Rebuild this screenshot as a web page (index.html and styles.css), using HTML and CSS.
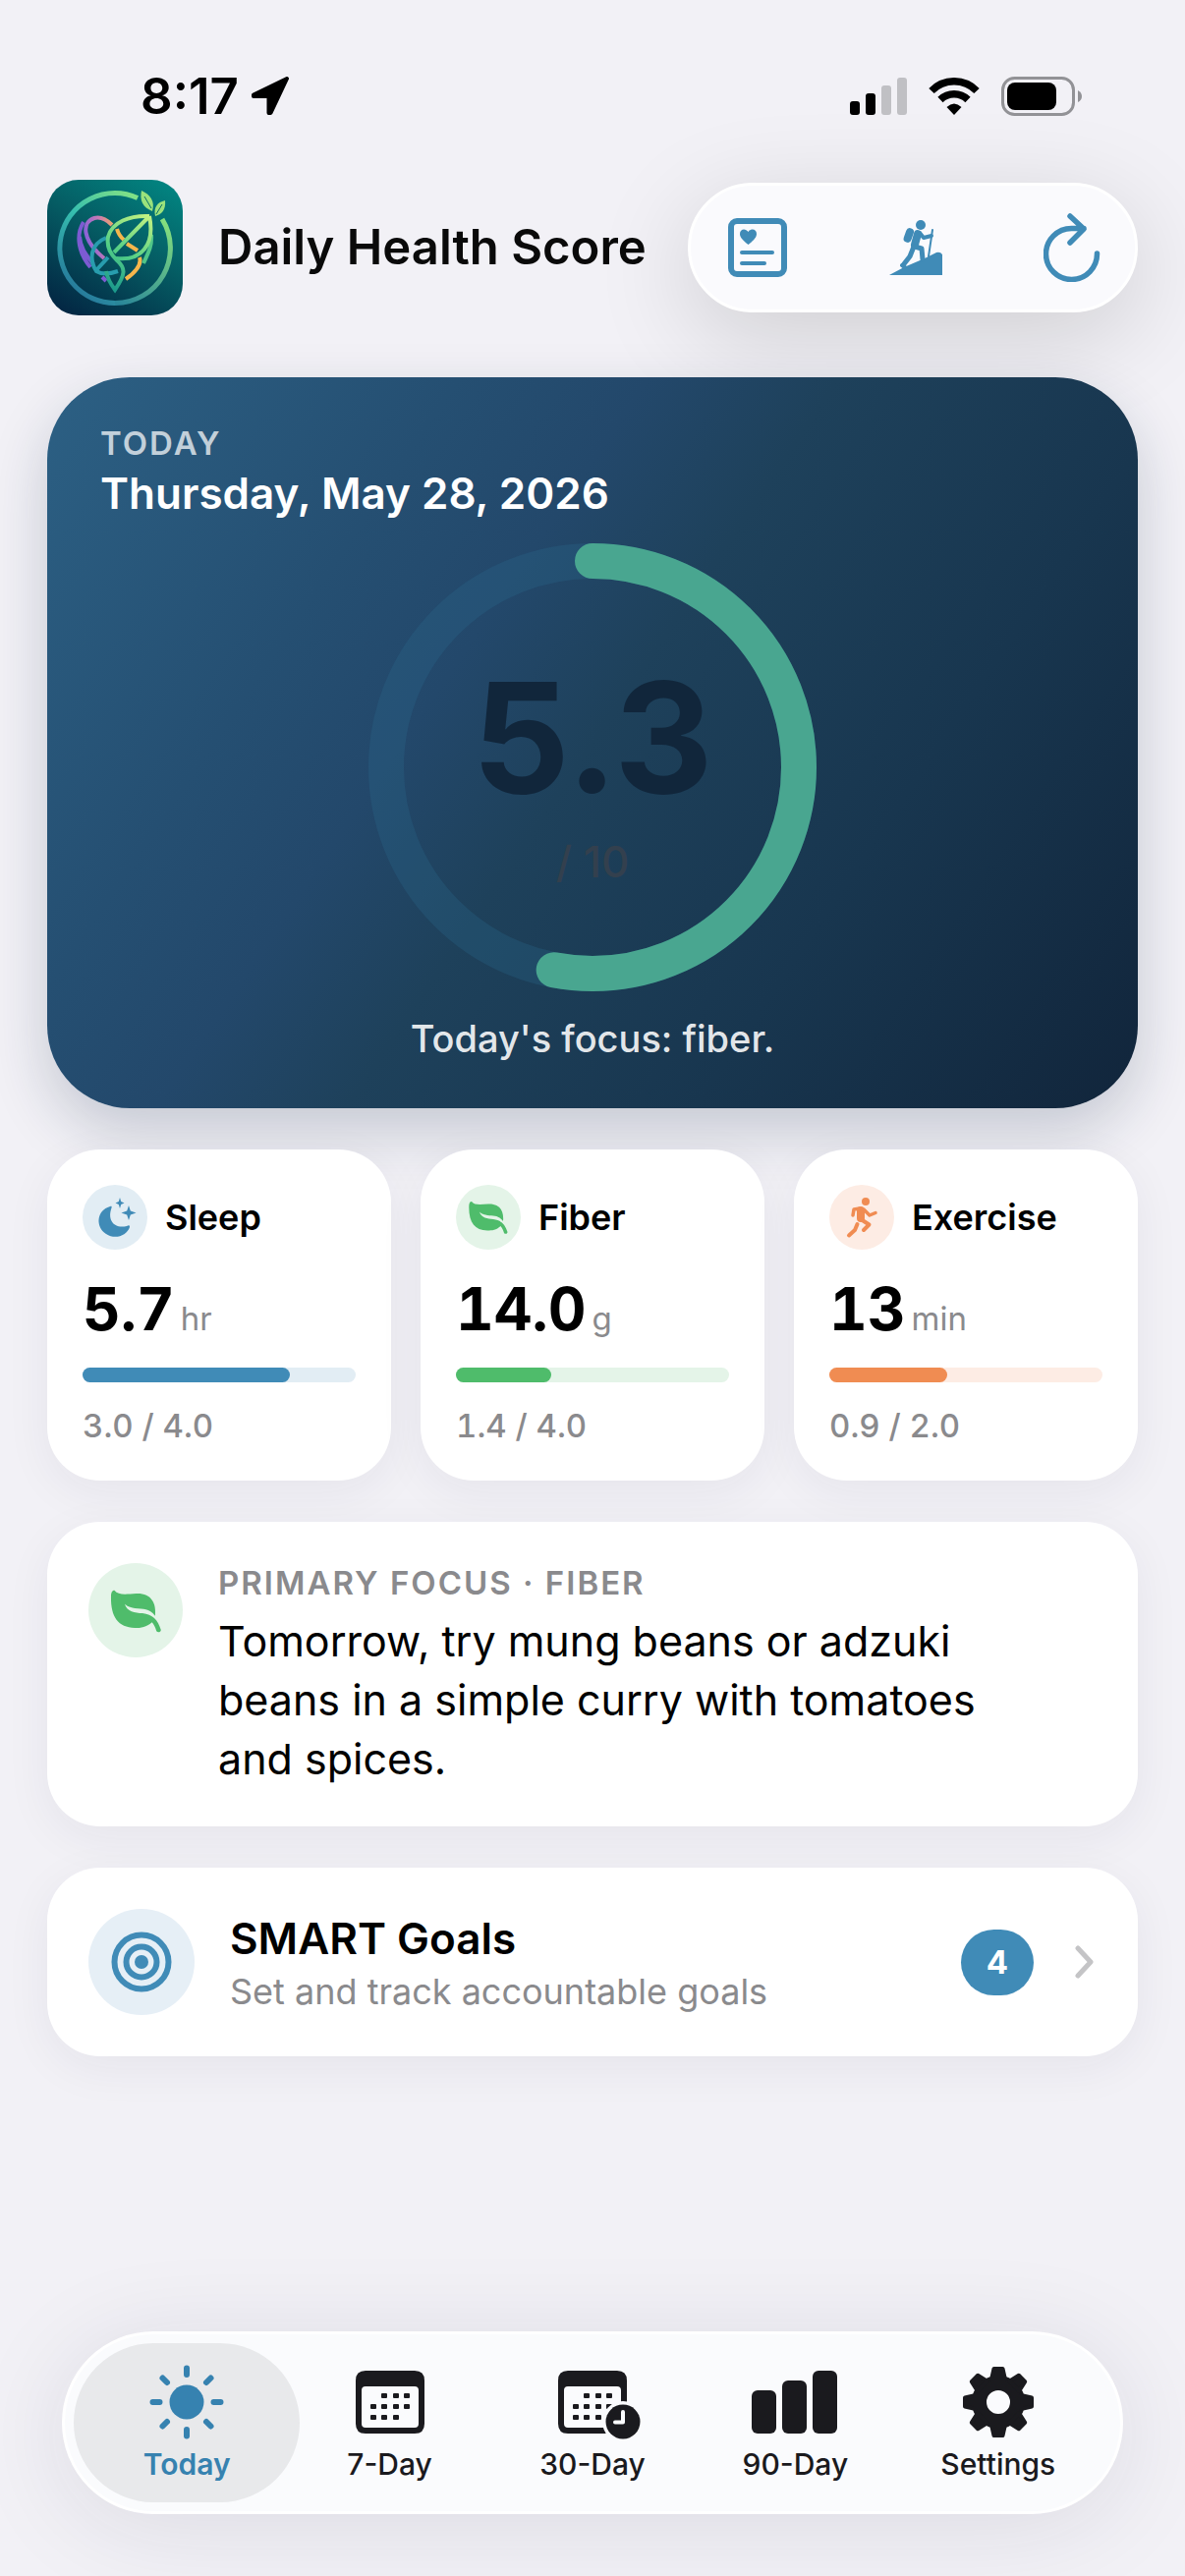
FILE: index.html
```html
<!DOCTYPE html>
<html lang="en">
<head>
<meta charset="utf-8">
<meta name="viewport" content="width=device-width, initial-scale=1">
<title>Daily Health Score</title>
<link rel="stylesheet" href="styles.css">
</head>
<body>
<svg class="defs" width="0" height="0" aria-hidden="true">
  <symbol id="leaf" viewBox="12 15 44 36">
    <path d="M17 17C20 21 26 20 34 19.500C46 19 50 27 49 37C44 30.500 40 32 33 31C28 30 26.500 29 25 27.500C27 34 33 34.500 39 35C47 36 51 40 53.500 48C53.500 50 51 50.500 50 49C49 45.500 48 44 46.500 42C42 46 38 46.500 33 46.500C20 46 14 38 14.300 22C14.300 19 15 17 17 17Z" fill="currentColor"/>
  </symbol>
  <symbol id="calendar" viewBox="0 0 70 64">
    <path fill-rule="evenodd" fill="currentColor" d="M10 0H60Q70 0 70 10V54Q70 64 60 64H10Q0 64 0 54V10Q0 0 10 0ZM10 16Q6 16 6 20V54Q6 58 10 58H60Q64 58 64 54V20Q64 16 60 16Z"/>
    <g fill="currentColor">
      <rect x="26" y="23" width="6" height="5" rx="1"/><rect x="38" y="23" width="6" height="5" rx="1"/><rect x="49" y="23" width="6" height="5" rx="1"/>
      <rect x="15" y="34" width="6" height="5" rx="1"/><rect x="26" y="34" width="6" height="5" rx="1"/><rect x="38" y="34" width="6" height="5" rx="1"/><rect x="49" y="34" width="6" height="5" rx="1"/>
      <rect x="15" y="45" width="6" height="5" rx="1"/><rect x="26" y="45" width="6" height="5" rx="1"/><rect x="38" y="45" width="6" height="5" rx="1"/>
    </g>
  </symbol>
</svg>

<div class="app">
  <div class="status">
    <div class="status-left">
      <span class="clock">8:17</span>
      <svg width="40" height="40" viewBox="0 0 40 40" aria-hidden="true"><path d="M37 2L3 18.500V20H18.500V37H20.500Z" fill="#000" stroke="#000" stroke-width="4" stroke-linejoin="round"/></svg>
    </div>
    <div class="status-right">
      <svg width="58" height="38" viewBox="0 0 58 38" aria-hidden="true">
        <rect x="0" y="24" width="10" height="14" rx="3"/><rect x="16" y="16" width="10" height="22" rx="3"/>
        <g fill="#c0c0c4"><rect x="32" y="8" width="10" height="30" rx="3"/><rect x="48" y="0" width="10" height="38" rx="3"/></g>
      </svg>
      <svg width="52" height="38" viewBox="0 0 52 38" aria-hidden="true">
        <g fill="none" stroke="#000" stroke-width="7.500"><path d="M3 13.500A32 32 0 0 1 49 13.500"/><path d="M12 22.500A20 20 0 0 1 40 22.500"/></g>
        <path d="M26 38L18.500 30Q26 23 33.500 30Z"/>
      </svg>
      <svg width="83" height="40" viewBox="0 0 83 40" aria-hidden="true">
        <rect x="1.500" y="1.500" width="72" height="37" rx="12" fill="none" stroke="#929296" stroke-width="3"/>
        <rect x="6" y="6" width="50" height="28" rx="8"/><path d="M78 14Q82 16 82 20T78 26Z" fill="#929296"/>
      </svg>
    </div>
  </div>

  <header class="header">
    <svg class="logo" width="138" height="138" viewBox="0 0 138 138" role="img" aria-label="App logo">
      <defs>
        <linearGradient id="bg" x1=".8" y1="0" x2=".2" y2="1"><stop offset="0" stop-color="#02827f"/><stop offset=".45" stop-color="#055c63"/><stop offset="1" stop-color="#032844"/></linearGradient>
        <linearGradient id="ring" gradientUnits="userSpaceOnUse" x1="110" y1="20" x2="35" y2="115"><stop offset="0" stop-color="#90e77e"/><stop offset=".5" stop-color="#36bfae"/><stop offset="1" stop-color="#277d9c"/></linearGradient>
        <linearGradient id="ring2" gradientUnits="userSpaceOnUse" x1="120" y1="40" x2="65" y2="126"><stop offset="0" stop-color="#86e17d"/><stop offset="1" stop-color="#26839a"/></linearGradient>
        <linearGradient id="lf" gradientUnits="userSpaceOnUse" x1="104" y1="36" x2="64" y2="110"><stop offset="0" stop-color="#c4f282"/><stop offset=".55" stop-color="#54cf86"/><stop offset="1" stop-color="#1c9a8c"/></linearGradient>
        <linearGradient id="warm" gradientUnits="userSpaceOnUse" x1="40" y1="60" x2="74" y2="52"><stop offset="0" stop-color="#8b62d8"/><stop offset=".5" stop-color="#c97bb2"/><stop offset="1" stop-color="#f7b64e"/></linearGradient>
      </defs>
      <rect width="138" height="138" rx="32" fill="url(#bg)"/>
      <g fill="none" stroke-width="5">
        <path d="M92 18.500A56 56 0 1 0 69 125.500" stroke="url(#ring)"/>
        <path d="M69 125.500A56 56 0 0 0 117 40" stroke="url(#ring2)"/>
        <g stroke-width="4">
          <path d="M37 43C28 58 33 76 44 89M33 58C34 72 43 80 47 86M56 99L60 103" stroke="#7c5bd2"/>
          <path d="M58 80C35 61 35 43 48 39C56 37 62 42 66 46" stroke="url(#warm)"/>
          <path d="M71 50Q73 57 78 61M81 65L92 72M94 79C97 88 87 96 80 101" stroke="#f5b64c"/>
          <path d="M106 56C107 68 102 76 98 85" stroke="#4fc588"/>
          <path d="M60 59C43 66 43 82 50 93Q58 98 72 93M50 92L62 79" stroke="#289dae"/>
          <path d="M104 37C84 36 66 43 62 58C60 70 66 77 71 82C80 90 80 96 69 112C63 104 61 99 60 93" stroke="url(#lf)"/>
          <path d="M104 37C110 66 96 83 70 80M104 37L68 74" stroke="url(#lf)"/>
        </g>
      </g>
      <g fill="#9be27c"><path d="M96 11C105 15 110 22 107 32C97 28 94 21 96 11Z"/><path d="M120 21C112 23 108 28 110 37C117 35 121 30 120 21Z"/></g>
      <path d="M99 17L106 29M117 25L111 35" stroke="#0a7069" stroke-width="1" fill="none"/>
    </svg>
    <h1 class="title">Daily Health Score</h1>
    <div class="toolbar">
      <button class="tool" type="button" aria-label="Health journal">
        <svg width="60" height="60" viewBox="0 0 60 60"><rect x="3" y="3" width="54" height="54" rx="6" fill="none" stroke="currentColor" stroke-width="6"/><path d="M20.500 27C14 22 12 19 12 16C12 10.500 18 10 20.500 14C23 10 29 10.500 29 16C29 19 27 22 20.500 27Z" fill="currentColor"/><path d="M14 35H45M14 46H37" stroke="currentColor" stroke-width="4" stroke-linecap="round"/></svg>
      </button>
      <button class="tool" type="button" aria-label="Activity">
        <svg width="54" height="56" viewBox="0 0 54 56"><circle cx="32" cy="5" r="5" fill="currentColor"/><rect x="16" y="8" width="8" height="15" rx="4" transform="rotate(20 20 15)" fill="currentColor"/><path d="M0 56L15 48L36 39L48 33Q52 32 54 35V56Z" fill="currentColor"/><g fill="none" stroke="currentColor" stroke-linecap="round" stroke-linejoin="round"><path d="M29 14L26 25" stroke-width="8"/><path d="M31 13L35 18L43 16" stroke-width="4"/><path d="M44 10L40 37" stroke-width="2"/><path d="M25 27L21 37L14 46" stroke-width="5"/><path d="M26 27L33 29L34 40" stroke-width="5"/><path d="M13 46L16 48" stroke-width="4"/></g></svg>
      </button>
      <button class="tool" type="button" aria-label="Refresh">
        <svg width="58" height="70" viewBox="0 0 58 70"><path d="M54.500 41A26 26 0 1 1 28.500 15.500H41M27 3L41 16L27 30" fill="none" stroke="currentColor" stroke-width="5.500" stroke-linecap="round" stroke-linejoin="round"/></svg>
      </button>
    </div>
  </header>

  <main class="content">
    <section class="hero">
      <p class="hero-over">TODAY</p>
      <h2 class="hero-date">Thursday, May 28, 2026</h2>
      <div class="gauge">
        <svg class="gauge-ring" viewBox="0 0 456 456" aria-hidden="true">
          <circle cx="228" cy="228" r="210" fill="none" stroke="#2a6a90" stroke-opacity=".28" stroke-width="36"/>
          <circle cx="228" cy="228" r="210" fill="none" stroke="#49a690" stroke-width="36" stroke-linecap="round" pathLength="100" stroke-dasharray="53 100" transform="rotate(-90 228 228)"/>
        </svg>
        <div class="gauge-text"><span class="gauge-value">5.3</span><span class="gauge-max">/ 10</span></div>
      </div>
      <p class="hero-focus">Today's focus: fiber.</p>
    </section>

    <section class="metrics">
      <article class="card metric blue">
        <div class="metric-head">
          <span class="dot"><svg width="66" height="66" viewBox="0 0 66 66" aria-hidden="true"><path d="M28 22C14 26 13 43 24 50C33 56 45 52 48 43C48 41 47 41 45 42C32 45 25 36 29.500 23.500C30 22 29.500 21.500 28 22ZM38 13L39.200 17L42.500 18.500L39.200 20L38 24L36.800 20L33.500 18.500L36.800 17ZM47 21L48.800 26.500L54.500 28.500L48.800 30.500L47 36L45.200 30.500L39.500 28.500L45.200 26.500Z" fill="currentColor"/></svg></span>
          <h3 class="metric-name">Sleep</h3>
        </div>
        <p class="metric-value"><strong>5.7</strong><span>hr</span></p>
        <div class="bar"><div class="bar-fill" style="width:76%"></div></div>
        <p class="metric-score">3.0 / 4.0</p>
      </article>
      <article class="card metric green">
        <div class="metric-head">
          <span class="dot"><svg width="44" height="36" aria-hidden="true"><use href="#leaf"/></svg></span>
          <h3 class="metric-name">Fiber</h3>
        </div>
        <p class="metric-value"><strong>14.0</strong><span>g</span></p>
        <div class="bar"><div class="bar-fill" style="width:35%"></div></div>
        <p class="metric-score">1.4 / 4.0</p>
      </article>
      <article class="card metric orange">
        <div class="metric-head">
          <span class="dot"><svg width="66" height="66" viewBox="0 0 66 66" aria-hidden="true"><circle cx="37" cy="17" r="4" fill="currentColor"/><g fill="none" stroke="currentColor" stroke-linecap="round" stroke-linejoin="round"><path d="M32 26L32 34" stroke-width="8"/><path d="M31 24L25 25L24 31" stroke-width="3.500"/><path d="M35 25L41 31L47 28.500" stroke-width="3.500"/><path d="M28.500 40L26 46L20 51.500" stroke-width="4"/><path d="M32 35L40.500 40.500L35 46" stroke-width="4"/></g></svg></span>
          <h3 class="metric-name">Exercise</h3>
        </div>
        <p class="metric-value"><strong>13</strong><span>min</span></p>
        <div class="bar"><div class="bar-fill" style="width:43%"></div></div>
        <p class="metric-score">0.9 / 2.0</p>
      </article>
    </section>

    <section class="card focus green">
      <span class="dot dot-focus"><svg width="57" height="47" aria-hidden="true"><use href="#leaf"/></svg></span>
      <div class="focus-body">
        <h3 class="focus-over">PRIMARY FOCUS · FIBER</h3>
        <p class="focus-text">Tomorrow, try mung beans or adzuki beans in a simple curry with tomatoes and spices.</p>
      </div>
    </section>

    <a class="card goals blue" href="#goals">
      <span class="dot dot-goals"><svg width="62" height="62" viewBox="0 0 62 62" aria-hidden="true"><g fill="none" stroke="currentColor" stroke-width="6"><circle cx="31" cy="31" r="27.500"/><circle cx="31" cy="31" r="15.500"/></g><circle cx="31" cy="31" r="7" fill="currentColor"/></svg></span>
      <span class="goals-body"><span class="goals-title">SMART Goals</span><span class="goals-sub">Set and track accountable goals</span></span>
      <span class="badge">4</span>
      <svg class="chevron" width="20" height="34" viewBox="0 0 20 34" aria-hidden="true"><path d="M3 3L16 17L3 31" fill="none" stroke="#c4c4c6" stroke-width="5" stroke-linecap="round" stroke-linejoin="round"/></svg>
    </a>
  </main>

  <nav class="tabs" aria-label="Main">
    <a class="tab active" href="#today" aria-current="page">
      <span class="tab-icon"><svg width="76" height="76" viewBox="0 0 76 76" aria-hidden="true"><circle cx="38" cy="38" r="17.500" fill="currentColor"/><path d="M38 3.500V10M38 66V72.500M3.500 38H10.500M65.500 38H72.500M13.500 13.500L18 18M58 58L62.500 62.500M13.500 62.500L18 58M58 18L62.500 13.500" stroke="currentColor" stroke-width="6" stroke-linecap="round"/></svg></span>
      <span class="tab-label">Today</span>
    </a>
    <a class="tab" href="#week">
      <span class="tab-icon"><svg width="70" height="64" aria-hidden="true"><use href="#calendar"/></svg></span>
      <span class="tab-label">7-Day</span>
    </a>
    <a class="tab" href="#month">
      <span class="tab-icon"><svg width="102" height="78" viewBox="-16 -7 102 78" aria-hidden="true"><use href="#calendar" width="70" height="64"/><circle cx="66" cy="52" r="21" fill="#fafbfd"/><circle cx="66" cy="52" r="17.500" fill="currentColor"/><path d="M66 42V52.500H58" fill="none" stroke="#fafbfd" stroke-width="4" stroke-linecap="round" stroke-linejoin="round"/></svg></span>
      <span class="tab-label">30-Day</span>
    </a>
    <a class="tab" href="#quarter">
      <span class="tab-icon"><svg width="88" height="64" viewBox="0 0 88 64" aria-hidden="true"><g fill="currentColor"><rect x="0" y="20" width="25" height="44" rx="6"/><rect x="31" y="10" width="25" height="54" rx="6"/><rect x="62" y="0" width="25" height="64" rx="6"/></g></svg></span>
      <span class="tab-label">90-Day</span>
    </a>
    <a class="tab" href="#settings">
      <span class="tab-icon"><svg width="72" height="72" viewBox="-36 -36 72 72" aria-hidden="true">
        <circle r="19.500" fill="none" stroke="currentColor" stroke-width="15"/>
        <g fill="currentColor" stroke="currentColor" stroke-width="4" stroke-linejoin="round">
          <path id="tooth" d="M-4.500 -34H4.500L7 -23H-7Z"/><use href="#tooth" transform="rotate(45)"/><use href="#tooth" transform="rotate(90)"/><use href="#tooth" transform="rotate(135)"/><use href="#tooth" transform="rotate(180)"/><use href="#tooth" transform="rotate(225)"/><use href="#tooth" transform="rotate(270)"/><use href="#tooth" transform="rotate(315)"/>
        </g></svg></span>
      <span class="tab-label">Settings</span>
    </a>
  </nav>
</div>
</body>
</html>
```
FILE: styles.css
```css
* { box-sizing: border-box; }
body {
  margin: 0;
  background: #f2f1f6;
  color: #000;
  font-family: Inter, "Liberation Sans", sans-serif;
}
h1, h2, h3, p { margin: 0; }
a { color: inherit; text-decoration: none; }
svg { display: block; flex: none; }
.defs { position: absolute; }

.app {
  display: flex;
  flex-direction: column;
  min-height: 100vh;
  padding: 66px 48px 63px;
}

/* Status bar */
.status {
  display: flex;
  justify-content: space-between;
  align-items: center;
  padding: 0 56px 0 95px;
  margin-bottom: 53px;
}
.status-left { display: flex; align-items: center; gap: 12px; }
.status-right { display: flex; align-items: center; gap: 22px; }
.clock { font-size: 51px; line-height: 64px; font-weight: 600; }

/* Header */
.header { display: flex; align-items: center; margin-bottom: 63px; }
.title {
  flex: 1;
  margin-left: 36px;
  font-size: 49px;
  line-height: 60px;
  font-weight: 600;
  white-space: nowrap;
  color: #0a0a0a;
}
.toolbar {
  display: flex;
  justify-content: space-between;
  align-items: center;
  width: 458px;
  height: 132px;
  padding: 0 35px 0 38px;
  border: 3px solid #fff;
  border-radius: 66px;
  background: #fafafd;
  box-shadow: 0 24px 100px rgba(0, 0, 0, .15);
}
.tool { padding: 0; border: 0; background: none; color: #408bb7; }

/* Score card */
.content { display: flex; flex-direction: column; gap: 42px; }
.hero {
  padding: 47px 54px;
  border-radius: 84px;
  color: #fff;
  background: linear-gradient(124deg, #2c6084 0%, #254f72 26%, #23486b 38%, #1e415b 50%, #18364f 72%, #11253b 100%);
  box-shadow: 0 24px 60px rgba(22, 40, 70, .2);
}
.hero-over, .focus-over {
  font-size: 33px;
  line-height: 40px;
  font-weight: 600;
  letter-spacing: 2px;
}
.hero-over { margin-bottom: 4px; color: rgba(255, 255, 255, .72); }
.hero-date { font-size: 44px; line-height: 54px; font-weight: 600; }
.gauge { display: grid; place-items: center; margin: 24px 0; }
.gauge > * { grid-area: 1 / 1; }
.gauge-ring { width: 456px; height: 456px; }
.gauge-text { display: flex; flex-direction: column; text-align: center; }
.gauge-value { font-size: 156px; line-height: 192px; font-weight: 700; color: #11263b; }
.gauge-max { font-size: 44px; line-height: 60px; font-weight: 500; color: #33404e; }
.hero-focus {
  font-size: 38px;
  line-height: 48px;
  font-weight: 500;
  text-align: center;
  color: rgba(255, 255, 255, .9);
}

/* Cards */
.card {
  border-radius: 54px;
  background: #fff;
  box-shadow: 0 12px 48px rgba(30, 30, 70, .06);
}
.blue { --tint: #408bb7; --soft: #e2edf4; }
.green { --tint: #4fbc6b; --soft: #e4f4e8; }
.orange { --tint: #f08c52; --soft: #fdece4; }
.dot {
  display: flex;
  flex: none;
  align-items: center;
  justify-content: center;
  width: 66px;
  height: 66px;
  border-radius: 50%;
  background: var(--soft);
  color: var(--tint);
}
.dot-focus { width: 96px; height: 96px; }
.dot-goals { width: 108px; height: 108px; background: #e6eff6; }

.metrics { display: grid; grid-template-columns: repeat(3, 1fr); gap: 30px; }
.metric {
  display: flex;
  flex-direction: column;
  gap: 24px;
  padding: 36px;
  font-variant-numeric: tabular-nums;
}
.metric-head { display: flex; align-items: center; gap: 18px; }
.metric-name { font-size: 36px; line-height: 44px; font-weight: 600; }
.metric-value { display: flex; align-items: baseline; gap: 6px; }
.metric-value strong { font-size: 60px; line-height: 72px; font-weight: 700; }
.metric-value span { font-size: 33px; line-height: 40px; color: #8a8a8d; }
.bar { height: 15px; border-radius: 8px; background: var(--soft); }
.bar-fill { height: 100%; border-radius: 8px; background: var(--tint); }
.metric-score { font-size: 33px; line-height: 40px; font-weight: 500; color: #8a8a8d; }

.focus { display: flex; gap: 36px; padding: 42px 42px 39px; }
.focus-body { flex: 1; }
.focus-over { margin-bottom: 9px; color: #8a8a8d; }
.focus-text { max-width: 800px; font-size: 43px; line-height: 60px; }

.goals { display: flex; align-items: center; padding: 42px; }
.goals-body { display: flex; flex: 1; flex-direction: column; margin-left: 36px; }
.goals-title { font-size: 44px; line-height: 60px; font-weight: 600; }
.goals-sub { font-size: 36px; line-height: 48px; color: #8a8a8d; }
.badge {
  padding: 12px 26px;
  border-radius: 34px;
  background: #408bb7;
  color: #fff;
  font-size: 33px;
  line-height: 43px;
  font-weight: 700;
}
.chevron { margin: 0 2px 0 42px; }

/* Tab bar */
.tabs {
  display: grid;
  grid-template-columns: repeat(5, 1fr);
  margin: auto 15px 0;
  padding: 9px 21px;
  border: 3px solid #fff;
  border-radius: 93px;
  background: #fafbfd;
  box-shadow: 0 12px 100px rgba(30, 30, 60, .1);
}
.tab {
  display: flex;
  flex-direction: column;
  align-items: center;
  gap: 5px;
  margin: 0 -12px;
  padding: 20px 0 21px;
  border-radius: 81px;
  color: #1a1a1e;
}
.tab.active { background: #e8e9eb; color: #3682b0; }
.tab-icon { display: flex; align-items: center; justify-content: center; height: 80px; }
.tab-label { font-size: 30px; line-height: 36px; font-weight: 500; }
.tab.active .tab-label { font-weight: 600; }
```
